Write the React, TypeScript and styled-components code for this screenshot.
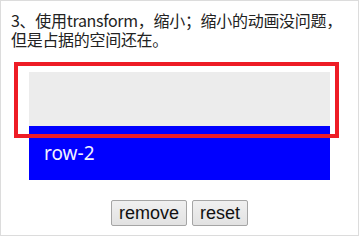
import React from "react";
import styled, { createGlobalStyle } from "styled-components";

const GlobalStyle = createGlobalStyle`
  html, body {
    margin: 0;
    padding: 0;
    background: #fff;
  }
  body {
    font-family: "Noto Sans CJK SC", "Noto Sans", sans-serif;
  }
`;

const Page = styled.div`
  box-sizing: border-box;
  width: 359px;
  height: 236px;
  border: 1px solid #dcdcdc;
  padding: 10px 10px 9px;
  display: flex;
  flex-direction: column;
`;

const Note = styled.p`
  margin: 0;
  font-size: 16px;
  line-height: 18.5px;
  letter-spacing: -0.3px;
  color: #222;
`;

const Stage = styled.div`
  position: relative;
  margin: 24px 18px 0;
`;

const Row = styled.div<{ $tone: "ghost" | "blue" }>`
  box-sizing: border-box;
  height: 54px;
  padding: 0 15px;
  display: flex;
  align-items: center;
  font-family: "Noto Sans", "Noto Sans CJK SC", sans-serif;
  font-size: 19px;
  color: #f2f2ff;
  background: ${(p) => (p.$tone === "blue" ? "#0000ff" : "#ececec")};
`;

// red outline that sits over the first row
const Highlight = styled.div`
  position: absolute;
  left: -15px;
  top: -10px;
  width: 325px;
  height: 76px;
  box-sizing: border-box;
  border: 4px solid #ee1c25;
  pointer-events: none;
`;

const Controls = styled.div`
  margin-top: 20px;
  display: flex;
  justify-content: center;
  gap: 5px;
`;

const Button = styled.button`
  box-sizing: border-box;
  height: 26px;
  padding: 0 7px;
  font-family: "Liberation Sans", Arial, sans-serif;
  font-size: 18px;
  color: #111;
  background: linear-gradient(#f0f0f0, #e2e2e2);
  border: 1px solid #a5a5a5;
  border-radius: 2px;
`;

export default function App() {
  return (
    <>
      <GlobalStyle />
      <Page>
        <Note>3、使用transform，缩小；缩小的动画没问题，但是占据的空间还在。</Note>
        <Stage>
          <Row $tone="ghost" />
          <Row $tone="blue">row-2</Row>
          <Highlight />
        </Stage>
        <Controls>
          <Button>remove</Button>
          <Button>reset</Button>
        </Controls>
      </Page>
    </>
  );
}
